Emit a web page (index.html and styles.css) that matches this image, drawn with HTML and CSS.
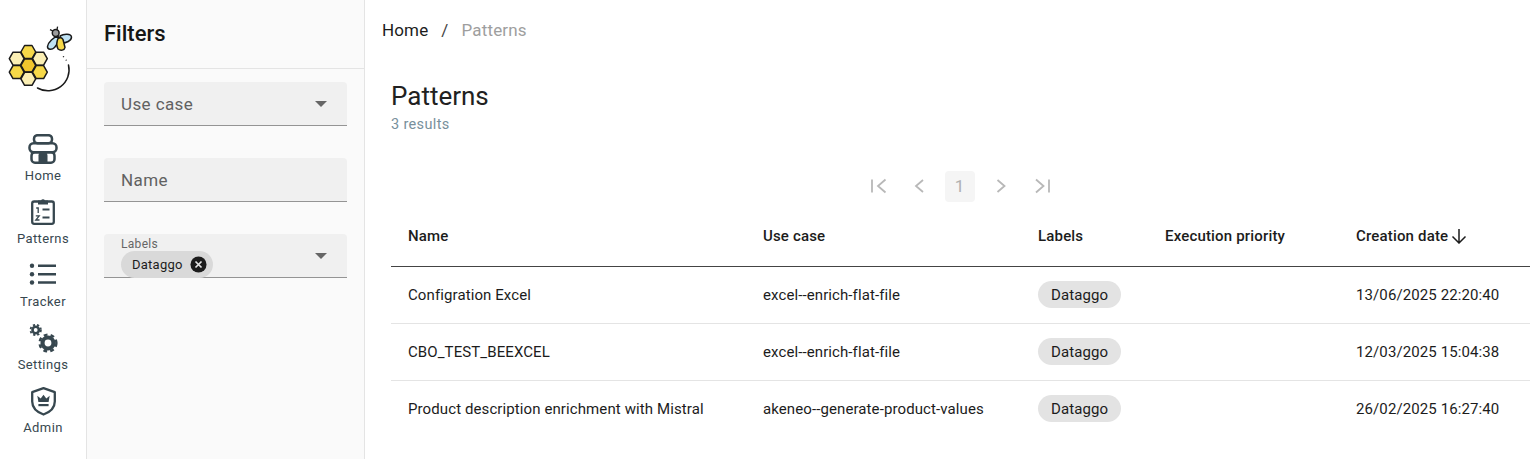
FILE: index.html
```html
<!DOCTYPE html>
<html lang="en">
<head>
<meta charset="utf-8">
<title>Patterns</title>
<link rel="stylesheet" href="styles.css">
</head>
<body>
<div class="app">
  <nav class="rail">
    <svg class="logo" viewBox="0 0 86 110" width="86" height="110" aria-hidden="true">
      <defs>
        <polygon id="hex" points="-7.400,0 -3.700,-6.500 3.700,-6.500 7.400,0 3.700,6.500 -3.700,6.500"/>
      </defs>
      <g stroke="#1a1a1a" stroke-width="1.500" stroke-linejoin="round">
        <use href="#hex" x="28.300" y="52" fill="#f6d848"/>
        <use href="#hex" x="16.700" y="58.700" fill="#fbefb4"/>
        <use href="#hex" x="39.900" y="58.700" fill="#fbefb4"/>
        <use href="#hex" x="28.300" y="65.400" fill="#f0c52d"/>
        <use href="#hex" x="16.700" y="72.100" fill="#f6d848"/>
        <use href="#hex" x="39.900" y="72.100" fill="#f6d848"/>
        <use href="#hex" x="28.300" y="78.800" fill="#fbefb4"/>
      </g>
      <path d="M37.500 88A21 21 0 0 0 68.500 65" fill="none" stroke="#1a1a1a" stroke-width="1.500" stroke-linecap="round"/>
      <path d="M63.300 56.300l.4.800M66 59.700l.4.800" stroke="#1a1a1a" stroke-width="1.400" fill="none"/>
      <g stroke="#1a1a1a" stroke-width="1.500" stroke-linejoin="round">
        <path d="M58 36C54 37 48 42 47.500 46.500 47.500 50 52 50 54.500 47.500 56.500 45.500 58 42 59 39z" fill="#bfe2f4"/>
        <path d="M60 36C64 33.500 71 33.500 71.500 37 71.500 41 66 43 62 43z" fill="#bfe2f4"/>
        <path d="M58 38.500C60 37 62 37.500 63 39.500L65 47.500C64.500 50.500 60.500 51 58 49 56.500 46 56.500 42 58 38.500z" fill="#f6d848"/>
        <circle cx="55.700" cy="33" r="3.400" fill="#9c9c9c"/>
      </g>
      <path d="M53 31l-3-1.300M57 29.500l.6-2.800" stroke="#1a1a1a" stroke-width="1.300" fill="none"/>
    </svg>
    <a class="rail-item">
      <svg viewBox="0 0 30 30" width="30" height="30" aria-hidden="true">
        <g fill="none" stroke="#37474f" stroke-width="2.500">
          <rect x="6" y="1.200" width="18" height="8" rx="3.500"/>
          <rect x="1.500" y="9.200" width="27" height="9" rx="4"/>
          <rect x="3.500" y="18.200" width="23" height="10.500" rx="3.500"/>
        </g>
        <path d="M10.500 29v-7.500a4.500 4.500 0 0 1 9 0V29z" fill="#37474f"/>
      </svg>
      <span>Home</span>
    </a>
    <a class="rail-item">
      <svg viewBox="0 0 30 30" width="30" height="30" aria-hidden="true">
        <rect x="4.200" y="4.500" width="21.600" height="22.300" rx="2" fill="none" stroke="#37474f" stroke-width="2.300"/>
        <path d="M10 7.500V3.500h3a2.200 2.200 0 0 1 4 0h3v4z" fill="#37474f"/>
        <path d="M14.500 12.500h7M14.500 20.500h7" stroke="#37474f" stroke-width="2.200"/>
        <path d="M8.200 11h2v5M7.800 18.800h3.400l-3.400 4.200h3.700" fill="none" stroke="#37474f" stroke-width="1.300"/>
      </svg>
      <span>Patterns</span>
    </a>
    <a class="rail-item">
      <svg viewBox="0 0 30 30" width="30" height="30" aria-hidden="true">
        <circle cx="4" cy="5.800" r="2.200" fill="#37474f"/>
        <circle cx="4" cy="14.200" r="2.200" fill="#37474f"/>
        <circle cx="4" cy="22.500" r="2.200" fill="#37474f"/>
        <path d="M10 5.800h18M10 14.200h18M10 22.500h18" stroke="#37474f" stroke-width="2.400"/>
      </svg>
      <span>Tracker</span>
    </a>
    <a class="rail-item">
      <svg viewBox="0 0 30 30" width="30" height="30" aria-hidden="true">
        <circle cx="7.700" cy="7" r="3.200" fill="none" stroke="#37474f" stroke-width="2.600"/>
        <circle cx="7.700" cy="7" r="5.200" fill="none" stroke="#37474f" stroke-width="1.800" stroke-dasharray="2.200 2"/>
        <circle cx="20" cy="20" r="5.500" fill="none" stroke="#37474f" stroke-width="4.200"/>
        <circle cx="20" cy="20" r="8.400" fill="none" stroke="#37474f" stroke-width="2.400" stroke-dasharray="3.800 3.200"/>
      </svg>
      <span>Settings</span>
    </a>
    <a class="rail-item">
      <svg viewBox="0 0 30 30" width="30" height="30" aria-hidden="true">
        <path d="M15.500 2.200 26.800 6.200v9.300c0 6-4.500 10.500-11.300 13C8.700 26 4.200 21.500 4.200 15.500V6.200z" fill="none" stroke="#37474f" stroke-width="2.300" stroke-linejoin="round"/>
        <path d="M9.300 9.800l3.400 2.700 2.800-3.700 2.800 3.700 3.400-2.700-1.100 6.200H10.400z" fill="#37474f"/>
        <path d="M10.400 18h10.200v2.200H10.400z" fill="#37474f"/>
      </svg>
      <span>Admin</span>
    </a>
  </nav>

  <aside class="filters">
    <h2 class="filters-title">Filters</h2>
    <div class="filters-body">
      <div class="field">
        <span class="field-label">Use case</span>
        <span class="caret"></span>
      </div>
      <div class="field">
        <span class="field-label">Name</span>
      </div>
      <div class="field field-chips">
        <div class="field-stack">
          <span class="field-mini">Labels</span>
          <span class="chip chip-input">Dataggo
            <svg viewBox="0 0 18 18" width="17" height="17" aria-hidden="true">
              <circle cx="9" cy="9" r="8.500" fill="#1c1c1c"/>
              <path d="M5.800 5.800l6.400 6.400M12.200 5.800l-6.400 6.400" stroke="#e6e6e6" stroke-width="1.800"/>
            </svg>
          </span>
        </div>
        <span class="caret"></span>
      </div>
    </div>
  </aside>

  <main class="main">
    <div class="crumbs">
      <span class="crumb-home">Home</span>
      <span class="crumb-sep">/</span>
      <span class="crumb-current">Patterns</span>
    </div>
    <section class="content">
      <h1 class="page-title">Patterns</h1>
      <p class="page-count">3 results</p>
      <div class="pager">
        <span class="page-slot"><svg viewBox="0 0 18 18" width="18" height="18" aria-hidden="true"><path d="M3 2.500v13M16.500 2.500 9 9l7.500 6.500" fill="none" stroke="#b8b8b8" stroke-width="1.800"/></svg></span>
        <span class="page-slot"><svg viewBox="0 0 18 18" width="18" height="18" aria-hidden="true"><path d="M13 3 6 9l7 6" fill="none" stroke="#b8b8b8" stroke-width="1.800"/></svg></span>
        <span class="page-slot page-num">1</span>
        <span class="page-slot"><svg viewBox="0 0 18 18" width="18" height="18" aria-hidden="true"><path d="M5.500 3l7 6-7 6" fill="none" stroke="#b8b8b8" stroke-width="1.800"/></svg></span>
        <span class="page-slot"><svg viewBox="0 0 18 18" width="18" height="18" aria-hidden="true"><path d="M16 2.500v13M3 2.500 10.500 9 3 15.500" fill="none" stroke="#b8b8b8" stroke-width="1.800"/></svg></span>
      </div>
      <table class="grid">
        <colgroup>
          <col class="c-name"><col class="c-use"><col class="c-labels"><col class="c-prio"><col class="c-date">
        </colgroup>
        <thead>
          <tr>
            <th>Name</th>
            <th>Use case</th>
            <th>Labels</th>
            <th>Execution priority</th>
            <th>
              <span class="sort">Creation date
                <svg viewBox="0 0 16 16" width="16" height="16" aria-hidden="true"><path d="M8 1v14M1.500 8.500 8 15l6.500-6.500" fill="none" stroke="#1c1c1c" stroke-width="1.500"/></svg>
              </span>
            </th>
          </tr>
        </thead>
        <tbody>
          <tr>
            <td>Configration Excel</td>
            <td>excel--enrich-flat-file</td>
            <td><span class="chip">Dataggo</span></td>
            <td></td>
            <td>13/06/2025 22:20:40</td>
          </tr>
          <tr>
            <td>CBO_TEST_BEEXCEL</td>
            <td>excel--enrich-flat-file</td>
            <td><span class="chip">Dataggo</span></td>
            <td></td>
            <td>12/03/2025 15:04:38</td>
          </tr>
          <tr>
            <td>Product description enrichment with Mistral</td>
            <td>akeneo--generate-product-values</td>
            <td><span class="chip">Dataggo</span></td>
            <td></td>
            <td>26/02/2025 16:27:40</td>
          </tr>
        </tbody>
      </table>
    </section>
  </main>
</div>
</body>
</html>
```
FILE: styles.css
```css
* { box-sizing: border-box; }
html, body { margin: 0; height: 100%; }
body { font-family: Roboto, "Liberation Sans", sans-serif; color: #1c1c1c; background: #fff; overflow: hidden; }
.app { display: flex; height: 459px; }

.rail { width: 87px; flex: none; border-right: 1px solid #e4e4e4; display: flex; flex-direction: column; align-items: center; }
.logo { display: block; flex: none; height: 110px; margin-bottom: 24px; }
.rail-item { display: flex; flex-direction: column; align-items: center; height: 63px; color: #37474f; }
.rail-item svg { display: block; flex: none; }
.rail-item span { font-size: 13px; line-height: 16px; margin-top: 4px; letter-spacing: 0.4px; }

.filters { width: 278px; flex: none; background: #fafafa; border-right: 1px solid #e4e4e4; }
.filters-title { margin: 0; height: 69px; padding: 21px 17px 0; font-size: 22px; line-height: 26px; font-weight: 500; color: #161616; border-bottom: 1px solid #e4e4e4; }
.filters-body { padding: 13px 17px 0 17px; display: flex; flex-direction: column; gap: 32px; }
.field { height: 44px; width: 243px; background: #f0f0f0; border-radius: 4px 4px 0 0; border-bottom: 1px solid #949494; padding: 0 17px; display: flex; align-items: center; justify-content: space-between; }
.field-label { font-size: 17px; letter-spacing: 0.4px; color: #616161; line-height: 44px; }
.caret { width: 0; height: 0; border-left: 6px solid transparent; border-right: 6px solid transparent; border-top: 6px solid #666; margin-right: 3px; }
.field-chips { align-items: flex-start; }
.field-stack { display: flex; flex-direction: column; align-items: flex-start; }
.field-mini { font-size: 12px; line-height: 14px; margin-top: 3px; color: #666; letter-spacing: 0.3px; }
.field-chips .caret { align-self: center; }

.chip { display: inline-flex; align-items: center; height: 27px; padding: 0 13px; border-radius: 14px; background: #e3e3e3; font-size: 15px; color: #1c1c1c; letter-spacing: 0.1px; }
.chip-input { background: #d9d9d9; font-size: 13px; letter-spacing: 0.25px; gap: 7px; padding: 0 6px 0 11px; }

.main { flex: 1; min-width: 0; }
.crumbs { display: flex; align-items: center; height: 60px; padding-left: 17px; font-size: 17px; letter-spacing: 0.15px; gap: 13px; }
.crumb-home { color: #1c1c1c; }
.crumb-sep { color: #444; }
.crumb-current { color: #9e9e9e; }
.content { padding: 0 8px 0 26px; }
.page-title { margin: 20px 0 0; font-size: 26px; line-height: 32px; font-weight: 400; color: #212121; }
.page-count { margin: 3px 0 0; font-size: 14.500px; line-height: 20px; color: #78909c; letter-spacing: 0.35px; }
.pager { display: flex; justify-content: center; align-items: center; gap: 11px; margin-top: 35px; height: 32px; }
.page-slot { width: 30px; height: 31px; display: flex; align-items: center; justify-content: center; }
.page-num { border-radius: 4px; background: #f5f5f5; color: #b0b0b0; font-size: 17px; }

.grid { width: 1139px; margin-top: 8px; border-collapse: collapse; table-layout: fixed; font-size: 15px; }
.c-name { width: 355px; } .c-use { width: 275px; } .c-labels { width: 127px; } .c-prio { width: 191px; } .c-date { width: 191px; }
.grid th { height: 56px; padding: 0 0 4px 17px; text-align: left; font-weight: 500; font-size: 15px; letter-spacing: 0.17px; border-bottom: 1px solid #444; white-space: nowrap; }
.grid td { height: 57px; padding: 0 0 0 17px; border-bottom: 1px solid #e4e4e4; letter-spacing: 0.1px; white-space: nowrap; }
.grid tbody tr:last-child td { border-bottom: 0; }
.sort { display: inline-flex; align-items: center; gap: 3px; }
```
